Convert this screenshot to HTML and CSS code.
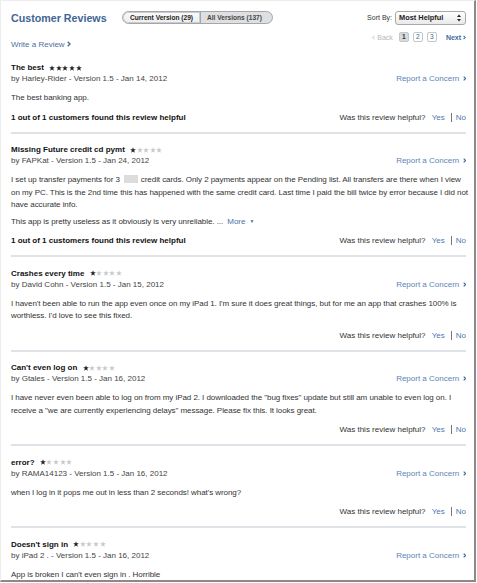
FILE: index.html
```html
<!DOCTYPE html>
<html>
<head>
<meta charset="utf-8">
<link rel="stylesheet" href="styles.css">
</head>
<body>
<svg class="defs" width="0" height="0">
  <defs>
    <symbol id="star" viewBox="0 0 10 10"><polygon points="5,0.3 6.2,3.6 9.8,3.7 7,5.9 8,9.4 5,7.3 2,9.4 3,5.9 0.2,3.7 3.8,3.6"/></symbol>
    <symbol id="chev" viewBox="0 0 4 6"><polyline points="0.7,0.7 3,3 0.7,5.3" fill="none" stroke="currentColor" stroke-width="1.4"/></symbol>
    <symbol id="chevl" viewBox="0 0 4 6"><polyline points="3.3,0.7 1,3 3.3,5.3" fill="none" stroke="currentColor" stroke-width="1.2"/></symbol>
  </defs>
</svg>
<div class="frame">
  <div class="page">
    <header class="top">
      <h1 class="title">Customer Reviews</h1>
      <div class="seg">
        <span class="seg-item on">Current Version (29)</span>
        <span class="seg-item">All Versions (137)</span>
      </div>
      <div class="sort">
        <span class="sort-label">Sort By:</span>
        <div class="select">
          <span>Most Helpful</span>
          <svg class="updown" viewBox="0 0 4 8"><polygon points="0,3 2,0.5 4,3"/><polygon points="0,5 2,7.5 4,5"/></svg>
        </div>
      </div>
    </header>

    <div class="subbar">
      <a class="write">Write a Review <svg class="chev"><use href="#chev"/></svg></a>
      <nav class="pager">
        <span class="back"><svg class="chev"><use href="#chevl"/></svg> Back</span>
        <span class="pg cur">1</span>
        <span class="pg">2</span>
        <span class="pg">3</span>
        <span class="next">Next <svg class="chev"><use href="#chev"/></svg></span>
      </nav>
    </div>

    <ul class="reviews">
      <li class="review">
        <div class="r-title">The best <span class="stars"><svg class="star"><use href="#star"/></svg><svg class="star"><use href="#star"/></svg><svg class="star"><use href="#star"/></svg><svg class="star"><use href="#star"/></svg><svg class="star"><use href="#star"/></svg></span></div>
        <div class="r-by"><span>by Harley-Rider - Version 1.5 - Jan 14, 2012</span><a class="report">Report a Concern <svg class="chev"><use href="#chev"/></svg></a></div>
        <p class="r-body">The best banking app.</p>
        <div class="r-help"><span class="count">1 out of 1 customers found this review helpful</span><span class="ask">Was this review helpful? <a class="yes">Yes</a><i class="sep"></i><a class="no">No</a></span></div>
      </li>

      <li class="review">
        <div class="r-title">Missing Future credit cd pymt <span class="stars"><svg class="star"><use href="#star"/></svg><svg class="star off"><use href="#star"/></svg><svg class="star off"><use href="#star"/></svg><svg class="star off"><use href="#star"/></svg><svg class="star off"><use href="#star"/></svg></span></div>
        <div class="r-by"><span>by FAPKat - Version 1.5 - Jan 24, 2012</span><a class="report">Report a Concern <svg class="chev"><use href="#chev"/></svg></a></div>
        <p class="r-body">I set up transfer payments for 3<span class="blur"></span><span>credit cards. Only 2 payments appear on the Pending list. All transfers are there when I view </span><span>on my PC. This is the 2nd time this has happened with the same credit card. Last time I paid the bill twice by error because I did not have accurate info.</span></p>
        <p class="r-body more-p">This app is pretty useless as it obviously is very unreliable. ... <a class="more">More</a> <span class="tri">▼</span></p>
        <div class="r-help"><span class="count">1 out of 1 customers found this review helpful</span><span class="ask">Was this review helpful? <a class="yes">Yes</a><i class="sep"></i><a class="no">No</a></span></div>
      </li>

      <li class="review">
        <div class="r-title">Crashes every time <span class="stars"><svg class="star"><use href="#star"/></svg><svg class="star off"><use href="#star"/></svg><svg class="star off"><use href="#star"/></svg><svg class="star off"><use href="#star"/></svg><svg class="star off"><use href="#star"/></svg></span></div>
        <div class="r-by"><span>by David Cohn - Version 1.5 - Jan 15, 2012</span><a class="report">Report a Concern <svg class="chev"><use href="#chev"/></svg></a></div>
        <p class="r-body">I haven't been able to run the app even once on my iPad 1. I'm sure it does great things, but for me an app that crashes 100% is worthless. I'd love to see this fixed.</p>
        <div class="r-help"><span class="ask">Was this review helpful? <a class="yes">Yes</a><i class="sep"></i><a class="no">No</a></span></div>
      </li>

      <li class="review">
        <div class="r-title">Can't even log on <span class="stars"><svg class="star"><use href="#star"/></svg><svg class="star off"><use href="#star"/></svg><svg class="star off"><use href="#star"/></svg><svg class="star off"><use href="#star"/></svg><svg class="star off"><use href="#star"/></svg></span></div>
        <div class="r-by"><span>by Gtales - Version 1.5 - Jan 16, 2012</span><a class="report">Report a Concern <svg class="chev"><use href="#chev"/></svg></a></div>
        <p class="r-body">I have never even been able to log on from my iPad 2. I downloaded the "bug fixes" update but still am unable to even log on. I receive a "we are currently experiencing delays" message. Please fix this. It looks great.</p>
        <div class="r-help"><span class="ask">Was this review helpful? <a class="yes">Yes</a><i class="sep"></i><a class="no">No</a></span></div>
      </li>

      <li class="review">
        <div class="r-title">error? <span class="stars"><svg class="star"><use href="#star"/></svg><svg class="star off"><use href="#star"/></svg><svg class="star off"><use href="#star"/></svg><svg class="star off"><use href="#star"/></svg><svg class="star off"><use href="#star"/></svg></span></div>
        <div class="r-by"><span>by RAMA14123 - Version 1.5 - Jan 16, 2012</span><a class="report">Report a Concern <svg class="chev"><use href="#chev"/></svg></a></div>
        <p class="r-body">when I log in it pops me out in less than 2 seconds! what's wrong?</p>
        <div class="r-help"><span class="ask">Was this review helpful? <a class="yes">Yes</a><i class="sep"></i><a class="no">No</a></span></div>
      </li>

      <li class="review last">
        <div class="r-title">Doesn't sign in <span class="stars"><svg class="star"><use href="#star"/></svg><svg class="star off"><use href="#star"/></svg><svg class="star off"><use href="#star"/></svg><svg class="star off"><use href="#star"/></svg><svg class="star off"><use href="#star"/></svg></span></div>
        <div class="r-by"><span>by iPad 2 . - Version 1.5 - Jan 16, 2012</span><a class="report">Report a Concern <svg class="chev"><use href="#chev"/></svg></a></div>
        <p class="r-body">App is broken I can't even sign in . Horrible</p>
      </li>
    </ul>
  </div>
</div>
</body>
</html>
```
FILE: styles.css
```css
* { box-sizing: border-box; }
html, body { margin: 0; padding: 0; background: #fff; }
body {
  font-family: "Liberation Sans", Arial, sans-serif;
  font-size: 8px;
  color: #333;
  width: 477px;
  height: 583px;
  overflow: hidden;
}
.defs { position: absolute; width: 0; height: 0; }
a { text-decoration: none; cursor: pointer; }

.frame {
  width: 476px;
  height: 582px;
  border-right: 2px solid #8a8a8a;
  border-bottom: 2px solid #8a8a8a;
  border-top: 1px solid #ededed;
  border-left: 1px solid #ededed;
  overflow: hidden;
}
.page {
  padding: 9px 8px 0 10px;
}

/* header */
.top {
  display: flex;
  align-items: center;
  height: 15px;
}
.title {
  margin: 0;
  font-size: 10.7px;
  font-weight: bold;
  color: #3f6594;
  line-height: 14px;
  width: 111px;
}
.seg {
  display: flex;
  height: 13px;
  border: 1px solid #a3a6aa;
  border-radius: 7px;
  overflow: hidden;
  background: #dedfe1;
}
.seg-item {
  font-size: 6.6px;
  font-weight: bold;
  color: #333;
  line-height: 11px;
  padding: 0 5px 0 7px;
  white-space: nowrap;
}
.seg-item.on {
  width: 78px;
  background: linear-gradient(#fbfbfb, #eceded);
  border-right: 1px solid #a3a6aa;
  color: #222;
  box-shadow: inset 0 0 0 1px #c9ccd0;
  border-radius: 7px 0 0 7px;
}
.seg-item + .seg-item { width: 71px; padding-left: 6px; color: #444; }

.sort {
  margin-left: auto;
  display: flex;
  align-items: center;
}
.sort-label { font-size: 7px; color: #333; margin-right: 3px; }
.select {
  width: 71px;
  height: 14px;
  border: 1px solid #a8a8a8;
  border-radius: 3px;
  background: linear-gradient(#ffffff, #e9e9e9);
  display: flex;
  align-items: center;
  padding: 0 4px 0 3px;
  font-size: 7.4px;
  font-weight: bold;
  color: #222;
}
.updown { width: 4px; height: 8px; margin-left: auto; fill: #222; }

/* sub bar */
.subbar {
  display: flex;
  align-items: flex-start;
  margin-top: 7px;
  height: 18px;
}
.write {
  margin-top: 8px;
  color: #4a71a1;
  line-height: 10px;
  font-size: 8px;
}
.chev { width: 4px; height: 6px; vertical-align: 0; color: inherit; }
.write .chev { width: 4px; height: 6px; }
.pager {
  margin-left: auto;
  display: flex;
  align-items: center;
  height: 10px;
  font-size: 7px;
}
.back { color: #b5b8bc; margin-right: 6px; }
.back .chev { width: 3px; height: 5px; }
.pg {
  width: 10px;
  height: 10px;
  border: 1px solid #c3c6ca;
  border-radius: 2px;
  text-align: center;
  line-height: 8px;
  font-size: 6.6px;
  color: #3d6494;
  margin-right: 4px;
}
.pg.cur { background: #d8dbde; color: #333; font-weight: bold; border-color: #c3c6ca; }
.next { margin-left: 5px; color: #3f6aa2; font-weight: bold; }
.next .chev { width: 3px; height: 5px; }

/* reviews */
.reviews { list-style: none; margin: 13px 0 0; padding: 0; }
.review {
  border-bottom: 2px solid #dfe2e6;
  padding: 11.5px 0 9px;
}
.review:first-child { padding-top: 0; }
.review.last { border-bottom: none; }

.r-title {
  font-weight: bold;
  color: #111;
  line-height: 10px;
  height: 10px;
}
.stars { display: inline-flex; gap: 0.6px; margin-left: 3px; vertical-align: -0.5px; }
.star { width: 6px; height: 6px; fill: #222; }
.star.off { fill: #c6c8cb; }

.r-by {
  display: flex;
  justify-content: space-between;
  line-height: 11px;
  color: #444;
}
.report { color: #5b84b6; }
.report .chev { width: 3.5px; height: 5px; color: #4a6f9c; margin-left: 1px; }

.r-body {
  margin: 8px -4px 0 0;
  line-height: 12.5px;
  color: #333;
  letter-spacing: -0.06px;
}
.more-p { margin-top: 3px; }
.more { color: #4a73a6; margin-left: 2px; }
.tri { font-size: 5px; color: #4a73a6; vertical-align: 1px; margin-left: 2px; }
.blur {
  display: inline-block;
  width: 14px;
  height: 8px;
  margin: 0 3px 0 4px;
  background: #dcdcdc;
  vertical-align: -1px;
}

.r-help {
  display: flex;
  align-items: center;
  margin-top: 7px;
  line-height: 11px;
}
.count { font-weight: bold; color: #111; }
.ask { margin-left: auto; display: flex; align-items: center; color: #333; white-space: pre; }
.yes { color: #4d79b0; margin-left: 4px; }
.no { color: #4d79b0; }
.sep { display: inline-block; width: 1px; height: 9px; background: #777; margin: 0 4px 0 6px; }
```
